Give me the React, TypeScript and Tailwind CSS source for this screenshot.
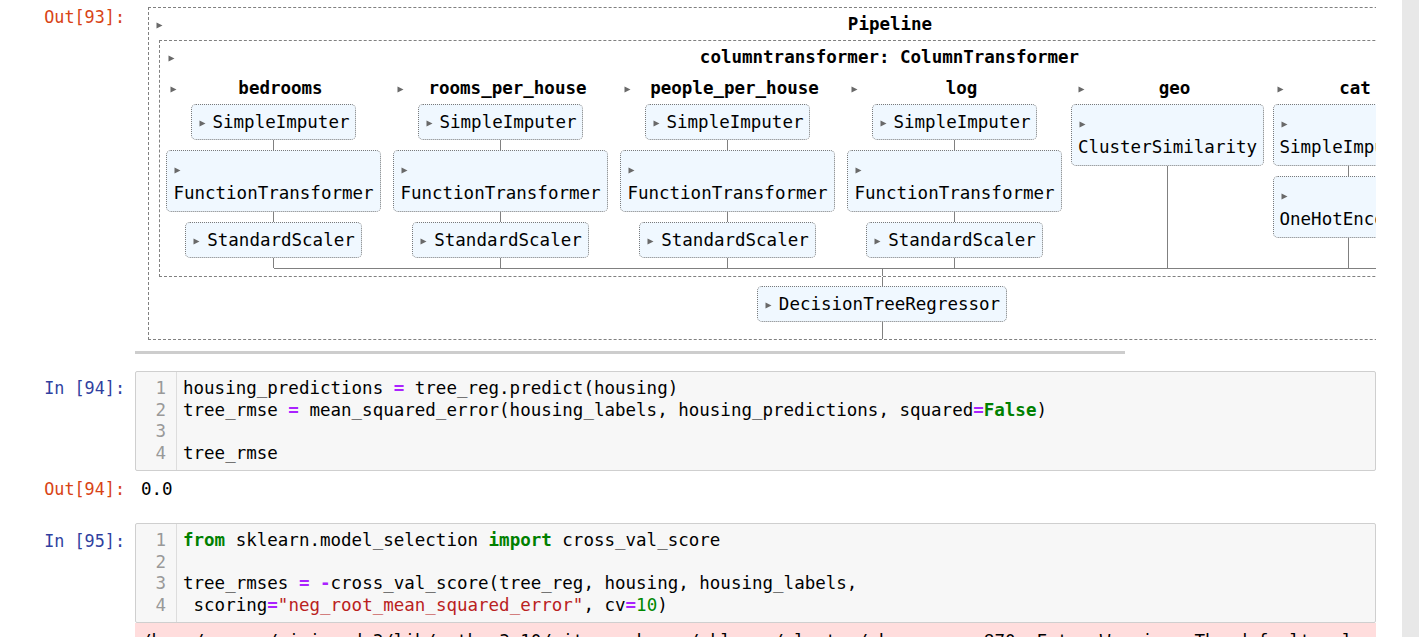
import { Fragment } from "react";

const LINE = "bg-[#808080]";

function Tri({ className = "" }: { className?: string }) {
  return (
    <svg width="7" height="7" viewBox="0 0 7 7" className={`shrink-0 ${className}`}>
      <polygon points="0.5,0.5 6.5,3.5 0.5,6.5" fill="#696969" />
    </svg>
  );
}

interface Step {
  name: string;
  wrap?: boolean;
}

function Estimator({ name, wrap }: Step) {
  if (wrap) {
    return (
      <div className="whitespace-nowrap rounded-[5px] border border-dotted border-[#7a7a7a] bg-[#f0f8ff] px-[6px] py-[6px] leading-[24px]">
        <div className="flex h-[24px] items-center pl-[1px]">
          <Tri className="translate-y-[1px]" />
        </div>
        <div>{name}</div>
      </div>
    );
  }
  return (
    <div className="flex items-center whitespace-nowrap rounded-[5px] border border-dotted border-[#7a7a7a] bg-[#f0f8ff] px-[6px] py-[6px] leading-[22px]">
      <span className="flex w-[15px] items-center pl-[1px]">
        <Tri className="translate-y-[1px]" />
      </span>
      <span>{name}</span>
    </div>
  );
}

interface Column {
  label: string;
  width: string;
  steps: Step[];
}

const columns: Column[] = [
  {
    label: "bedrooms",
    width: "w-[227px]",
    steps: [{ name: "SimpleImputer" }, { name: "FunctionTransformer", wrap: true }, { name: "StandardScaler" }],
  },
  {
    label: "rooms_per_house",
    width: "w-[227px]",
    steps: [{ name: "SimpleImputer" }, { name: "FunctionTransformer", wrap: true }, { name: "StandardScaler" }],
  },
  {
    label: "people_per_house",
    width: "w-[227px]",
    steps: [{ name: "SimpleImputer" }, { name: "FunctionTransformer", wrap: true }, { name: "StandardScaler" }],
  },
  {
    label: "log",
    width: "w-[227px]",
    steps: [{ name: "SimpleImputer" }, { name: "FunctionTransformer", wrap: true }, { name: "StandardScaler" }],
  },
  {
    label: "geo",
    width: "w-[199px]",
    steps: [{ name: "ClusterSimilarity", wrap: true }],
  },
  {
    label: "cat",
    width: "w-[162px]",
    steps: [{ name: "SimpleImputer", wrap: true }, { name: "OneHotEncoder", wrap: true }],
  },
  {
    label: "remainder",
    width: "w-[175px]",
    steps: [{ name: "FunctionTransformer", wrap: true }],
  },
];

function ParallelColumn({ col, first, last }: { col: Column; first: boolean; last: boolean }) {
  return (
    <div className={`flex shrink-0 flex-col ${col.width}`}>
      <div className="mb-[4px] mt-[4px] flex h-[23px] items-center">
        <Tri className="ml-[10px] translate-y-[1px]" />
        <span className="flex-1 pr-[3px] text-center font-bold">{col.label}</span>
      </div>
      <div className="flex flex-1 flex-col items-center">
        {col.steps.map((s, i) => (
          <Fragment key={s.name}>
            {i > 0 && <div className={`h-[10px] w-px ${LINE}`} />}
            <Estimator {...s} />
          </Fragment>
        ))}
        <div className={`min-h-[10px] w-px flex-1 ${LINE}`} />
      </div>
      <div className="flex h-px">
        <div className={`flex-1 ${first ? "" : LINE}`} />
        <div className={`flex-1 ${last ? "" : LINE}`} />
      </div>
    </div>
  );
}

function PipelineDiagram() {
  return (
    <div className="w-[1470px] shrink-0 border border-dashed border-[#808080] text-[17.5px]">
      <div className="flex h-[32px] items-center">
        <Tri className="ml-[7px] translate-y-[1px]" />
        <span className="flex-1 text-center font-bold">Pipeline</span>
      </div>
      <div className="ml-[10px] w-[1446px] border border-dashed border-[#808080]">
        <div className="flex h-[32px] items-center">
          <Tri className="ml-[8px] translate-y-[1px]" />
          <span className="flex-1 text-center font-bold">columntransformer: ColumnTransformer</span>
        </div>
        <div className="flex">
          {columns.map((c, i) => (
            <ParallelColumn key={c.label} col={c} first={i === 0} last={i === columns.length - 1} />
          ))}
        </div>
        <div className="flex h-[7px] justify-center">
          <div className={`w-px ${LINE}`} />
        </div>
      </div>
      <div className="ml-[10px] flex w-[1446px] flex-col items-center">
        <div className={`h-[9px] w-px ${LINE}`} />
        <Estimator name="DecisionTreeRegressor" />
        <div className={`h-[17px] w-px ${LINE}`} />
      </div>
    </div>
  );
}

function Prompt({ kind, n, className = "" }: { kind: "in" | "out"; n: number; className?: string }) {
  return (
    <div
      className={`w-[135px] shrink-0 pr-[10px] text-right text-[16.8px] leading-[21.5px] ${
        kind === "in" ? "text-[#303F9F]" : "text-[#D84315]"
      } ${className}`}
    >
      {kind === "in" ? `In [${n}]:` : `Out[${n}]:`}
    </div>
  );
}

const Op = ({ children }: { children: string }) => <span className="font-bold text-[#AA22FF]">{children}</span>;
const Kw = ({ children }: { children: string }) => <span className="font-bold text-[#008000]">{children}</span>;
const Str = ({ children }: { children: string }) => <span className="text-[#BA2121]">{children}</span>;
const Num = ({ children }: { children: string }) => <span className="text-[#008800]">{children}</span>;

function CodeCell({ lines }: { lines: React.ReactNode[] }) {
  return (
    <div className="flex w-[1241px] rounded-[2px] border border-[#cfcfcf] bg-[#f7f7f7] text-[17.5px] leading-[21.5px]">
      <div className="w-[41px] shrink-0 border-r border-[#dddddd] py-[6px] pr-[10px] text-right text-[#999999]">
        {lines.map((_, i) => (
          <div key={i} className="h-[21.5px]">
            {i + 1}
          </div>
        ))}
      </div>
      <div className="flex-1 py-[6px] pl-[6px]">
        {lines.map((l, i) => (
          <div key={i} className="h-[21.5px] whitespace-pre">
            {l}
          </div>
        ))}
      </div>
    </div>
  );
}

export default function App() {
  return (
    <div className="flex h-[637px] w-[1419px] overflow-hidden bg-white font-['DejaVu_Sans_Mono',monospace] text-black">
      <div className="w-[1402px] shrink-0">
        {/* Out[93] */}
        <div className="flex">
          <Prompt kind="out" n={93} className="pt-[7px]" />
          <div className="w-[1241px]">
            <div className="overflow-hidden pl-[13px] pt-[7px]">
              <PipelineDiagram />
            </div>
            <div className="mt-[11px] h-[3px] w-[990px] bg-[#cdcdcd]" />
          </div>
        </div>

        {/* In[94] */}
        <div className="mt-[17px] flex">
          <Prompt kind="in" n={94} className="pt-[7px]" />
          <CodeCell
            lines={[
              <>
                housing_predictions <Op>=</Op> tree_reg.predict(housing)
              </>,
              <>
                tree_rmse <Op>=</Op> mean_squared_error(housing_labels, housing_predictions, squared<Op>=</Op>
                <Kw>False</Kw>)
              </>,
              "",
              "tree_rmse",
            ]}
          />
        </div>

        {/* Out[94] */}
        <div className="flex h-[52px]">
          <Prompt kind="out" n={94} className="pt-[8px]" />
          <div className="pl-[6px] pt-[8px] text-[17.5px] leading-[21.5px]">0.0</div>
        </div>

        {/* In[95] */}
        <div className="flex">
          <Prompt kind="in" n={95} className="pt-[8px]" />
          <div>
            <CodeCell
              lines={[
                <>
                  <Kw>from</Kw> sklearn.model_selection <Kw>import</Kw> cross_val_score
                </>,
                "",
                <>
                  tree_rmses <Op>=</Op> <Op>-</Op>cross_val_score(tree_reg, housing, housing_labels,
                </>,
                <>
                  {" scoring"}
                  <Op>=</Op>
                  <Str>"neg_root_mean_squared_error"</Str>, cv<Op>=</Op>
                  <Num>10</Num>)
                </>,
              ]}
            />
            <div className="h-[40px] w-[1241px] overflow-hidden whitespace-pre bg-[#ffdddd] pl-[6px] pt-[8px] text-[17.5px] leading-[21.5px]">
              /home/ageron/miniconda3/lib/python3.10/site-packages/sklearn/cluster/_kmeans.py:870: FutureWarning: The
              default value of `n_init` will change from 10 to 'auto' in 1.4.
            </div>
          </div>
        </div>
      </div>
      <div className="w-[17px] shrink-0 bg-[#e8e8e8]" />
    </div>
  );
}
